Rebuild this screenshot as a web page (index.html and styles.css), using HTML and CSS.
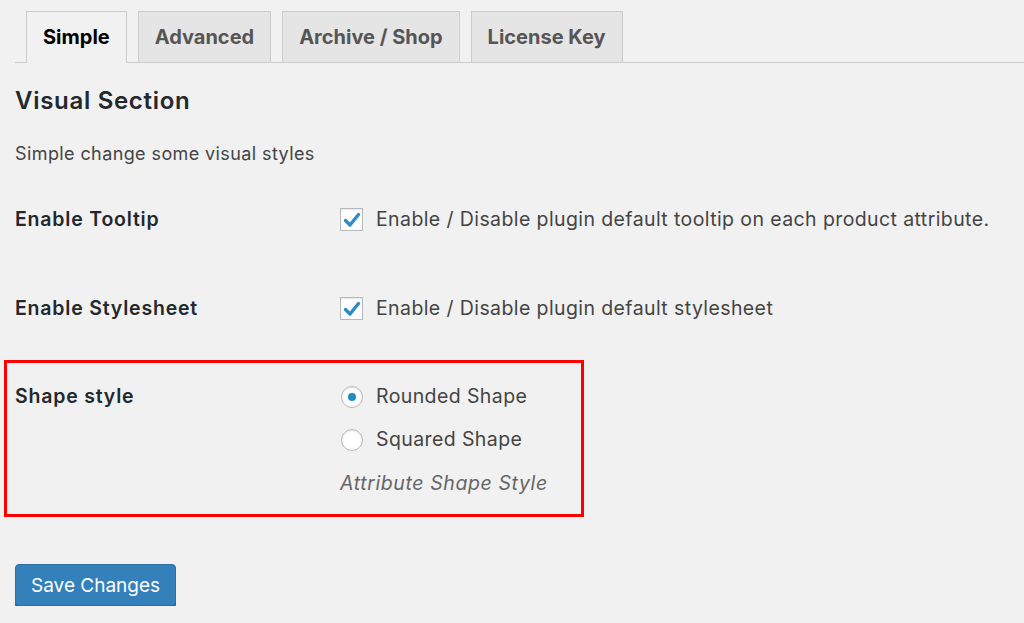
FILE: index.html
```html
<!DOCTYPE html>
<html lang="en">
<head>
    <meta charset="UTF-8">
    <title>Plugin Settings</title>
    <link rel="stylesheet" href="styles.css">
</head>
<body>
    <!-- Tabs along the top -->
    <nav class="nav-tab-wrapper">
        <a class="nav-tab nav-tab-active" href="#">Simple</a>
        <a class="nav-tab" href="#">Advanced</a>
        <a class="nav-tab" href="#">Archive / Shop</a>
        <a class="nav-tab" href="#">License Key</a>
    </nav>

    <h2 class="section-title">Visual Section</h2>
    <p class="section-desc">Simple change some visual styles</p>

    <div class="form-table">
        <div class="form-row">
            <div class="row-label">Enable Tooltip</div>
            <div class="row-field">
                <label class="check-line">
                    <span class="checkbox">
                        <svg viewBox="0 0 20 20" width="20" height="20"><path d="M3.5 10.5 L8 15 L16.5 4.5" fill="none" stroke="#2f8bc7" stroke-width="3.4" stroke-linecap="round" stroke-linejoin="round"/></svg>
                    </span>
                    Enable / Disable plugin default tooltip on each product attribute.
                </label>
            </div>
        </div>

        <div class="form-row">
            <div class="row-label">Enable Stylesheet</div>
            <div class="row-field">
                <label class="check-line">
                    <span class="checkbox">
                        <svg viewBox="0 0 20 20" width="20" height="20"><path d="M3.5 10.5 L8 15 L16.5 4.5" fill="none" stroke="#2f8bc7" stroke-width="3.4" stroke-linecap="round" stroke-linejoin="round"/></svg>
                    </span>
                    Enable / Disable plugin default stylesheet
                </label>
            </div>
        </div>

        <!-- highlighted option -->
        <div class="highlight-box">
            <div class="form-row">
                <div class="row-label">Shape style</div>
                <div class="row-field">
                    <label class="check-line">
                        <span class="radio radio-on"></span>
                        Rounded Shape
                    </label>
                    <label class="check-line">
                        <span class="radio"></span>
                        Squared Shape
                    </label>
                    <p class="field-desc">Attribute Shape Style</p>
                </div>
            </div>
        </div>
    </div>

    <div class="submit">
        <button class="button-primary">Save Changes</button>
    </div>
</body>
</html>
```

FILE: styles.css
```css
/* WordPress-like admin settings page */
body {
    margin: 0;
    padding: 0 0 0 15px;
    background-color: #f1f1f1;
    color: #444;
    font-family: Inter, "Open Sans", sans-serif;
    font-size: 19.5px;
    letter-spacing: 0.4px;
}

.nav-tab-wrapper {
    display: flex;
    gap: 11px;
    padding: 11px 0 0 11px;
    border-bottom: 1px solid #ccc;
}
.nav-tab {
    display: block;
    height: 50px;
    line-height: 50px;
    padding: 0 16px;
    border: 1px solid #ccc;
    border-bottom: none;
    background-color: #e5e5e5;
    color: #555;
    font-size: 20px;
    font-weight: 700;
    letter-spacing: 0;
    text-decoration: none;
}
.nav-tab-active {
    background-color: #f1f1f1;
    color: #000;
    margin-bottom: -1px;
    height: 51px;
}

.section-title {
    margin: 23px 0 0;
    font-size: 24px;
    font-weight: 600;
    letter-spacing: 0.7px;
    line-height: 30px;
    color: #23282d;
}
.section-desc {
    margin: 25px 0 0;
    font-size: 18px;
    line-height: 25px;
}

.form-table {
    margin-top: 41px;
}
.form-row {
    display: grid;
    grid-template-columns: 325px 1fr;
    line-height: 25px;
    margin-bottom: 64px;
}
.row-label {
    font-weight: 600;
    letter-spacing: 0.8px;
    color: #23282d;
}
.row-field {
    display: flex;
    flex-direction: column;
    gap: 18px;
}
.check-line {
    display: flex;
    align-items: center;
    gap: 13px;
}

.checkbox {
    width: 21px;
    height: 21px;
    border: 1px solid #b4b9be;
    background-color: #fff;
    box-shadow: inset 0 1px 2px rgba(0, 0, 0, 0.1);
    display: flex;
    align-items: center;
    justify-content: center;
}
.radio {
    width: 20px;
    height: 20px;
    margin-left: 1px;
    border: 1px solid #b4b9be;
    border-radius: 50%;
    background-color: #fff;
    box-shadow: inset 0 1px 2px rgba(0, 0, 0, 0.1);
    display: flex;
    align-items: center;
    justify-content: center;
}
.radio-on::after {
    content: "";
    width: 8px;
    height: 8px;
    border-radius: 50%;
    background-color: #1e8cbe;
}
.field-desc {
    margin: 1px 0 0;
    font-style: italic;
    letter-spacing: 0.6px;
    color: #666;
}

.highlight-box {
    margin: -25px 0 0 -11px;
    width: 566px;
    padding: 21px 0 18px 8px;
    border: 3px solid #ff0000;
}
.highlight-box .form-row {
    margin-bottom: 0;
}

.submit {
    margin-top: 47px;
}
.button-primary {
    height: 42px;
    padding: 0 15px;
    background-color: #3480ba;
    border: 1px solid #2b6fa3;
    border-radius: 4px;
    box-shadow: 0 2px 0 #22618f;
    color: #fff;
    font-family: Inter, "Open Sans", sans-serif;
    font-size: 19px;
    letter-spacing: 0;
}
```
